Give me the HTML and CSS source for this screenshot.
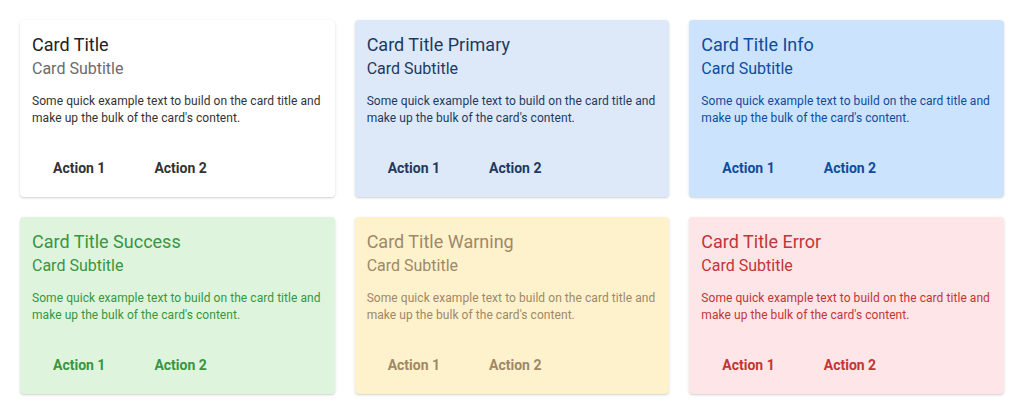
FILE: index.html
```html
<!DOCTYPE html>
<html>
<head>
<meta charset="utf-8">
<link rel="stylesheet" href="styles.css">
</head>
<body>
<div class="grid">
  <div class="card">
    <div class="title">Card Title</div>
    <div class="subtitle">Card Subtitle</div>
    <p class="text">Some quick example text to build on the card title and make up the bulk of the card's content.</p>
    <div class="actions"><button class="btn">Action 1</button><button class="btn">Action 2</button></div>
  </div>
  <div class="card primary">
    <div class="title">Card Title Primary</div>
    <div class="subtitle">Card Subtitle</div>
    <p class="text">Some quick example text to build on the card title and make up the bulk of the card's content.</p>
    <div class="actions"><button class="btn">Action 1</button><button class="btn">Action 2</button></div>
  </div>
  <div class="card info">
    <div class="title">Card Title Info</div>
    <div class="subtitle">Card Subtitle</div>
    <p class="text">Some quick example text to build on the card title and make up the bulk of the card's content.</p>
    <div class="actions"><button class="btn">Action 1</button><button class="btn">Action 2</button></div>
  </div>
  <div class="card success">
    <div class="title">Card Title Success</div>
    <div class="subtitle">Card Subtitle</div>
    <p class="text">Some quick example text to build on the card title and make up the bulk of the card's content.</p>
    <div class="actions"><button class="btn">Action 1</button><button class="btn">Action 2</button></div>
  </div>
  <div class="card warning">
    <div class="title">Card Title Warning</div>
    <div class="subtitle">Card Subtitle</div>
    <p class="text">Some quick example text to build on the card title and make up the bulk of the card's content.</p>
    <div class="actions"><button class="btn">Action 1</button><button class="btn">Action 2</button></div>
  </div>
  <div class="card error">
    <div class="title">Card Title Error</div>
    <div class="subtitle">Card Subtitle</div>
    <p class="text">Some quick example text to build on the card title and make up the bulk of the card's content.</p>
    <div class="actions"><button class="btn">Action 1</button><button class="btn">Action 2</button></div>
  </div>
</div>
</body>
</html>
```
FILE: styles.css
```css
html, body {
  margin: 0;
  padding: 0;
  background: #ffffff;
}
body {
  font-family: Roboto, "Liberation Sans", sans-serif;
}
.grid {
  display: grid;
  grid-template-columns: repeat(3, 1fr);
  gap: 20px;
  padding: 20px;
}
.card {
  background: #ffffff;
  border-radius: 4px;
  box-shadow: 0 1px 3px rgba(0, 0, 0, 0.14), 0 1px 1px rgba(0, 0, 0, 0.06);
  padding: 13px 10px 11px 12px;
  color: #333333;
  display: flex;
  flex-direction: column;
}
.title {
  font-size: 18px;
  line-height: 24px;
  color: #222222;
}
.subtitle {
  font-size: 16px;
  line-height: 24px;
  color: #6b6b6b;
}
.text {
  margin: 12px 0 0 0;
  font-size: 12px;
  line-height: 17px;
  letter-spacing: 0.06px;
  color: #333333;
}
.actions {
  display: flex;
  gap: 7px;
  margin-top: 23px;
}
.btn {
  font-family: inherit;
  font-size: 14px;
  font-weight: 700;
  line-height: 36px;
  height: 36px;
  padding: 0 21px;
  border: none;
  background: transparent;
  color: inherit;
  cursor: pointer;
}
.primary { background: #dde9f8; color: #1e3a5f; }
.primary .title, .primary .subtitle, .primary .text { color: #1e3a5f; }
.info { background: #cce3fd; color: #0f4c9e; }
.info .title, .info .subtitle, .info .text { color: #0f4c9e; }
.success { background: #dff4dc; color: #37963f; }
.success .title, .success .subtitle, .success .text { color: #37963f; }
.warning { background: #fef2cd; color: #a08866; }
.warning .title, .warning .subtitle, .warning .text { color: #a08866; }
.error { background: #fde5e8; color: #c33535; }
.error .title, .error .subtitle, .error .text { color: #c33535; }
```
